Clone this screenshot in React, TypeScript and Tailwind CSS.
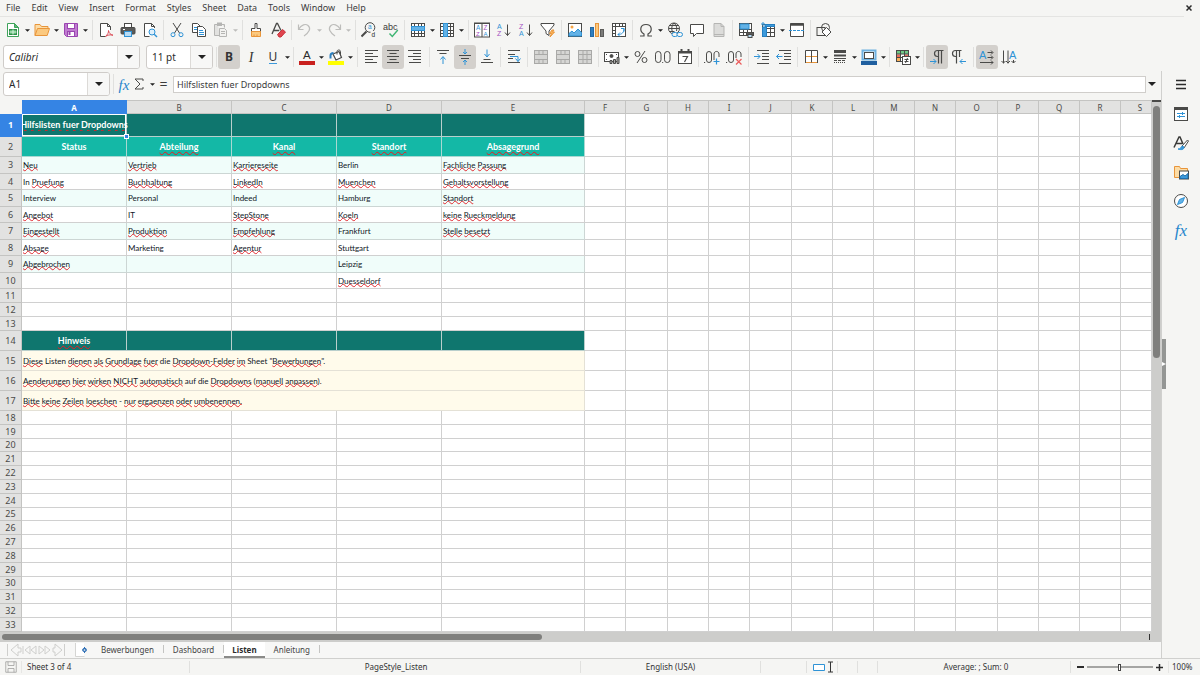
import { Fragment, ReactNode } from 'react'
import clsx from 'clsx'

const INK = '#4a4a48'
const BLUE = '#2f93d6'

/* ---------- Icons ---------- */

const Svg = ({ children, className }: { children: ReactNode; className?: string }) => (
  <svg viewBox="0 0 16 16" className={clsx('h-4 w-4 shrink-0', className)} fill="none" stroke={INK} strokeWidth="1">
    {children}
  </svg>
)

const Letter = ({ x, y, size, fill, children }: { x: number; y: number; size: number; fill: string; children: string }) => (
  <text x={x} y={y} fontSize={size} fill={fill} stroke="none" fontFamily="Liberation Sans, sans-serif">
    {children}
  </text>
)

const mergeGrid = (
  <>
    <rect x="1.5" y="1.5" width="13" height="13" fill="#d6d6d4" stroke="#a9a9a7" />
    <path d="M1.5 5.5h13M1.5 10.5h13M6 1.5v4M10 1.5v4M6 10.5v4M10 10.5v4" stroke="#a9a9a7" />
  </>
)

const icons: Record<string, ReactNode> = {
  new: (
    <>
      <path d="M2.5 1.5h7l4 4v9h-11z" fill="#fff" stroke="#3fa35b" />
      <path d="M9.5 1.5v4h4z" fill="#5dba74" stroke="#3fa35b" />
      <rect x="4.5" y="7.5" width="7" height="5" fill="#5dba74" stroke="#2f8f4a" />
      <path d="M4.5 10h7M8 7.5v5" stroke="#d9f2df" />
    </>
  ),
  open: (
    <>
      <path d="M1 13.500v-11h5l1.500 2h6.500v3" fill="#fcdca6" stroke="#e8953a" />
      <path d="M1 13.500l2.500-7h12l-2.300 7z" fill="#fbc97f" stroke="#e8953a" />
    </>
  ),
  save: (
    <>
      <path d="M1.500 1.500h13v13h-11l-2-2z" fill="#c07bd0" stroke="#9a45b0" />
      <rect x="4.500" y="1.500" width="7" height="5" fill="#fff" stroke="#9a45b0" />
      <rect x="4.500" y="9.500" width="7" height="5" fill="#fff" stroke="#9a45b0" />
      <path d="M6.500 10v3" stroke="#9a45b0" strokeWidth="2" />
    </>
  ),
  pdf: (
    <>
      <path d="M12.500 8v-3.500l-3-3h-7v13h5" fill="#fff" />
      <path d="M9.500 1.500v3h3" />
      <path d="M10.500 8.500c.3 2-1 4-3 6 2-1.500 4.500-2 7.500-1.300-2.500-.5-4-2-4.500-4.700z" stroke="#d9434e" strokeWidth=".9" />
    </>
  ),
  print: (
    <>
      <rect x="4.500" y="1.500" width="7" height="4" fill="#fff" />
      <rect x="1" y="5.500" width="14" height="6.500" rx="1" fill="#5b5b59" />
      <path d="M3 7.500h2" stroke="#fff" />
      <rect x="4.500" y="9.500" width="7" height="5" fill="#b9dcf5" stroke={BLUE} />
    </>
  ),
  preview: (
    <>
      <path d="M12.500 6v-1.500l-3-3h-7v13h5" fill="#fff" />
      <path d="M9.500 1.500v3h3" />
      <circle cx="10" cy="10" r="3" fill="#dff0fb" stroke={BLUE} />
      <path d="M12.200 12.200l2.800 2.800" stroke={BLUE} strokeWidth="1.400" />
    </>
  ),
  cut: (
    <>
      <path d="M4 1l6.500 10M12 1l-6.500 10" />
      <circle cx="4" cy="12.700" r="2" stroke={BLUE} />
      <circle cx="12" cy="12.700" r="2" stroke={BLUE} />
    </>
  ),
  copy: (
    <>
      <path d="M1.500 1.500h5l3 3v6h-8z" fill="#fff" />
      <path d="M3 5.500h4M3 7.500h4" stroke={BLUE} />
      <path d="M6.500 4.500h5l3 3v7h-8z" fill="#fff" />
      <path d="M8 8.500h4M8 10.500h5M8 12.500h5" stroke={BLUE} />
    </>
  ),
  paste: (
    <>
      <path d="M5 2.500h-3.500v11h5M9 2.500h2.500v3" fill="#e2e2e0" stroke="#b5b5b3" />
      <rect x="4.500" y="1" width="4" height="2.500" fill="#b5b5b3" stroke="#b5b5b3" />
      <path d="M6.500 6.500h5l2 2v6h-7z" fill="#f2f2f0" stroke="#b5b5b3" />
      <path d="M8 9.500h4M8 11.500h4" stroke="#b5b5b3" />
    </>
  ),
  clone: (
    <>
      <path d="M7 1.500h2v5h3.500v3h-9v-3h3.500z" fill="#fff" />
      <path d="M3.500 9.500h9v5h-9z" fill="#fbc97f" stroke="#e8953a" />
      <path d="M6 14.500v-2M9 14.500v-2" stroke="#e8953a" />
    </>
  ),
  clear: (
    <>
      <path d="M2 12l4.500-10.500h1l3.500 7M3.800 8.500h5.500" strokeWidth="1.300" />
      <path d="M7.500 12.500l5-5 3 2.500-4.500 5h-2z" fill="#e0454e" stroke="#c9323c" />
    </>
  ),
  undo: <path d="M1.500 2.500v5h5M1.500 7.500c3-5 7-6 9.500-4 3.500 3 1 7-4 10.500" stroke="#bdbdbb" strokeWidth="1.200" />,
  redo: <path d="M14.500 2.500v5h-5M14.500 7.500c-3-5-7-6-9.500-4-3.500 3-1 7 4 10.500" stroke="#bdbdbb" strokeWidth="1.200" />,
  find: (
    <>
      <circle cx="9" cy="5.500" r="4.800" />
      <path d="M5.500 9.500l-5 5" strokeWidth="2" />
      <Letter x={7} y={7.300} size={6.500} fill={BLUE}>a</Letter>
      <path d="M9.500 9h6v7h-6z" fill="#f5f5f3" stroke="none" />
      <Letter x={10.500} y={14.800} size={6.500} fill="#2b2b2b">d</Letter>
    </>
  ),
  spell: (
    <>
      <Letter x={0} y={8} size={9} fill="#3a3a38">abc</Letter>
      <path d="M6.500 11.500l2.800 3 5.500-6.500" stroke="#3fb573" strokeWidth="1.400" />
    </>
  ),
  row: (
    <>
      <rect x="1.500" y="1.500" width="13" height="13" fill="#fff" />
      <path d="M4.500 1.500v13M8.500 1.500v13M11.500 1.500v13M1.500 11.500h13" />
      <rect x="1.500" y="4.500" width="13" height="4" fill="#63b2e6" stroke={BLUE} />
    </>
  ),
  col: (
    <>
      <rect x="1.500" y="1.500" width="13" height="13" fill="#fff" />
      <path d="M1.500 4.500h13M1.500 8.500h13M1.500 11.500h13M11.500 1.500v13" />
      <rect x="4.500" y="1.500" width="4" height="13" fill="#63b2e6" stroke={BLUE} />
    </>
  ),
  sort: (
    <>
      <rect x=".5" y="1" width="15" height="14" fill="#fff" />
      <path d="M.5 1.500h15M8 2v13" />
      <Letter x={2} y={7.600} size={6.300} fill={BLUE}>A</Letter>
      <Letter x={2} y={14.400} size={6} fill="#a34fc0">Z</Letter>
      <Letter x={9.500} y={7.600} size={6.300} fill="#a34fc0">Z</Letter>
      <Letter x={9.500} y={14.400} size={6} fill={BLUE}>A</Letter>
    </>
  ),
  asc: (
    <>
      <Letter x={1} y={6.500} size={7} fill={BLUE}>A</Letter>
      <Letter x={1} y={14.400} size={7} fill="#a34fc0">Z</Letter>
      <path d="M11.500 2.500v11M9 10.500l2.500 3 2.500-3" />
    </>
  ),
  desc: (
    <>
      <Letter x={1} y={6.500} size={7} fill="#a34fc0">Z</Letter>
      <Letter x={1} y={14.400} size={7} fill={BLUE}>A</Letter>
      <path d="M11.500 2.500v11M9 10.500l2.500 3 2.500-3" />
    </>
  ),
  filter: (
    <>
      <path d="M1 1.500h13v1.500l-5 6v4.500l-3-2v-2.500l-5-6z" fill="#fff" />
      <path d="M12 8l-2.500 3.500h2l-1.500 3.500 4.500-5h-2l1.500-2z" fill="#fbb35a" stroke="#e8953a" />
    </>
  ),
  image: (
    <>
      <rect x="1.500" y="1.500" width="13" height="13" fill="#fff" />
      <circle cx="5" cy="5" r="1.500" fill="#f6a545" stroke="none" />
      <path d="M2 14v-2.500l3-2.500 2 2 4-4 3.500 3.500v3.500z" fill="#63b2e6" stroke={BLUE} />
    </>
  ),
  chart: (
    <>
      <rect x="1.500" y="5.500" width="3" height="9" fill="#2f7fc0" stroke="#2569a3" />
      <rect x="6.500" y="1.500" width="3" height="13" fill="#fbc97f" stroke="#e8953a" />
      <rect x="11.500" y="7.500" width="3" height="7" fill="#7b7b79" stroke="#5b5b59" />
    </>
  ),
  pivot: (
    <>
      <rect x="1.500" y="1.500" width="13" height="13" fill="#fff" />
      <path d="M1.500 4.500h13M4.500 1.500v13M8.500 1.500v3M11.500 1.500v3M1.500 8.500h3M1.500 11.500h3" />
      <path d="M10 6.500h3v3M13 6.500c0 4-2 6-6 6M9 10.500l-2 2 2 2" stroke={BLUE} />
    </>
  ),
  omega: <path d="M2 14h4v-2C1 9 2 2.500 8 2.500S15 9 10 12v2h4" strokeWidth="1.200" />,
  link: (
    <>
      <circle cx="7" cy="6.500" r="5.500" />
      <path d="M1.500 6.500h11M2.500 3.500h9M2.500 9.500h5M7 1c-3 3-3 8 0 11M7 1c3 3 3 5 2.500 8" />
      <rect x="5" y="10.500" width="5.500" height="4" rx="2" fill="#f5f5f3" stroke={BLUE} />
      <rect x="10" y="10.500" width="5.500" height="4" rx="2" fill="#f5f5f3" stroke={BLUE} />
    </>
  ),
  comment: <path d="M1.500 2.500h13v9h-7l-3 3v-3h-3z" fill="#fff" />,
  page: (
    <>
      <path d="M3 1.500h7l3 3v10h-10z" fill="#dcdcda" stroke="#b5b5b3" />
      <path d="M10 1.500v3h3M3 12.500h10" stroke="#b5b5b3" />
    </>
  ),
  printArea: (
    <>
      <rect x="1.500" y="1.500" width="12" height="12" fill="#fff" />
      <path d="M1.500 7.500h12M1.500 10.500h12M5.500 1.500v12M9.500 1.500v12" />
      <path d="M2 2h9v5h-9z" fill="#63b2e6" stroke={BLUE} />
      <rect x="8.500" y="10.500" width="7" height="3" fill="#5b5b59" />
      <rect x="10" y="12.500" width="4" height="3" fill="#b9dcf5" />
    </>
  ),
  freeze: (
    <>
      <rect x="2.500" y="2.500" width="12" height="12" fill="#fff" />
      <path d="M2.500 6.500h12M2.500 10.500h12M6.500 2.500v12M10.500 2.500v12" />
      <path d="M2.500 5h4v9.500h-4zM5 2.500h9.500v2H5z" fill="#3d9adb" stroke="#2480c2" />
      <path d="M3 0v4M1 2h4" stroke={BLUE} />
    </>
  ),
  split: (
    <>
      <path d="M1.500 1.500h13v13h-13z" fill="#fff" />
      <path d="M1.500 2.500h13" strokeWidth="2.500" />
      <path d="M0 8.500h16" stroke={BLUE} strokeDasharray="3 1" />
    </>
  ),
  shapes: (
    <>
      <rect x="1" y="5.500" width="8" height="8" />
      <circle cx="9.500" cy="5.500" r="4" />
      <path d="M10.500 5.500l4.500 4.500-4.500 4.500-4.500-4.500z" fill="#fff" />
    </>
  ),
  fontColor: (
    <>
      <Letter x={4} y={10} size={11.500} fill="#2b2b2b">A</Letter>
      <rect x="0" y="12" width="16" height="4" fill="#c9211e" stroke="none" />
    </>
  ),
  fill: (
    <>
      <path d="M5 5l6-2.500 2.500 6-5.500 2.500z" fill="#fff" strokeWidth="1.200" />
      <path d="M9 5.500v-3c0-2 3.500-2 3.500 0v4" />
      <path d="M2.500 9.500v-3c0-1.500 1-2.500 3-2.500" stroke="#2b7fbf" strokeWidth="2" />
      <rect x="0" y="12" width="16" height="4" fill="#ffff00" stroke="none" />
    </>
  ),
  left: <path d="M2 1.500h13M2 4.500h8M2 7.500h13M2 10.500h8M2 13.500h12" />,
  center: <path d="M2 1.500h12M4.500 4.500h7M2 7.500h12M4.500 10.500h7M2 13.500h12" />,
  right: <path d="M1 1.500h13M6 4.500h8M1 7.500h13M6 10.500h8M2 13.500h12" />,
  top: (
    <>
      <path d="M2 1.500h12M4.500 4.500h7" />
      <path d="M8 15v-7M5.500 10.500l2.500-3 2.500 3" stroke={BLUE} />
    </>
  ),
  middle: (
    <>
      <path d="M2 6.500h12M4 9.500h8" />
      <path d="M8 0v5M6 3l2 2 2-2M8 16v-5M6 13l2-2 2 2" stroke={BLUE} />
    </>
  ),
  bottom: (
    <>
      <path d="M4.500 10.500h7M2 13.500h12" />
      <path d="M8 .5v7M5.500 5l2.500 3 2.500-3" stroke={BLUE} />
    </>
  ),
  wrap: (
    <>
      <path d="M2 1.500h12M2 5.500h7M2 9.500h5M2 13.500h12" />
      <path d="M4 7.500h8v5M9.500 9.500l2.500 3 2.500-3" stroke={BLUE} />
    </>
  ),
  merge1: mergeGrid,
  merge2: mergeGrid,
  merge3: (
    <>
      {mergeGrid}
      <path d="M6 5.500v5M10 5.500v5" stroke="#a9a9a7" />
    </>
  ),
  currency: (
    <>
      <rect x=".5" y="3.500" width="14" height="9" fill="#fff" />
      <circle cx="7.500" cy="7" r="1.500" fill={INK} />
      <path d="M2 5.500h1M12 5.500h1M2 10.500h1" />
      <path d="M6 11.500h2v3h-2zM9.500 10.500h2v4h-2zM13 8.500h2v6h-2z" fill="#a8a8a6" />
    </>
  ),
  percent: (
    <>
      <circle cx="4.500" cy="5" r="2.500" />
      <circle cx="11.500" cy="11" r="2.500" />
      <path d="M12 2l-8 12" />
    </>
  ),
  number: (
    <>
      <rect x=".5" y="2.500" width="5.500" height="11" rx="2.700" />
      <rect x="9.500" y="2.500" width="5.500" height="11" rx="2.700" />
      <path d="M7.200 13.500h1" />
    </>
  ),
  date: (
    <>
      <rect x="1.500" y="2.500" width="13" height="12" fill="#fff" />
      <path d="M1.500 3.500h13M4.500 0v3M11.500 0v3" strokeWidth="2" />
      <path d="M5.500 7.500h5l-3 5.500" strokeWidth="1.200" />
    </>
  ),
  addDecimal: (
    <>
      <rect x="2.500" y="2.500" width="5" height="11" rx="2.500" />
      <path d="M10 11V5c0-3.400 5-3.400 5 0v3M0 13.500h1.200" />
      <path d="M12.500 9.500v6M9.500 12.500h6" stroke={BLUE} strokeWidth="1.200" />
    </>
  ),
  delDecimal: (
    <>
      <rect x="2.500" y="2.500" width="5" height="11" rx="2.500" />
      <path d="M10 9V5c0-3.400 5-3.400 5 0v3M0 13.500h1.200" />
      <path d="M10 10l5.500 5.500M15.500 10l-5.500 5.500" stroke="#ea5b5b" strokeWidth="1.200" />
    </>
  ),
  indent: (
    <>
      <path d="M3 1.500h12M8 4.500h7M8 7.500h7M8 10.500h7M3 14.500h12" />
      <path d="M0 7.500h6M3.500 5l2.500 2.500-2.500 2.500" stroke={BLUE} />
    </>
  ),
  outdent: (
    <>
      <path d="M3 1.500h12M8 4.500h7M8 7.500h7M8 10.500h7M3 14.500h12" />
      <path d="M6.500 7.500h-6M3 5l-2.500 2.500 2.500 2.500" stroke={BLUE} />
    </>
  ),
  borders: (
    <>
      <path d="M2.500 1.500h12v12h-12z" fill="#fff" stroke="none" />
      <path d="M3 7.500h11M3 13.500h11" stroke="#e8953a" />
      <path d="M2.500 14v-12.500h12v12.500M8.500 2v11.500" />
    </>
  ),
  lineStyle: (
    <>
      <path d="M2 2.500h12" strokeWidth="3" />
      <path d="M2 6.500h12" strokeWidth="2" />
      <path d="M2 9.500h12" />
      <path d="M2 11.500h12" strokeDasharray="3 1" />
      <path d="M2 13.500h12" strokeDasharray="1 1" />
    </>
  ),
  borderColor: (
    <>
      <rect x="1.500" y="1.500" width="13" height="9" fill="#fff" stroke="#6fb1e0" strokeWidth="2" />
      <rect x="3.500" y="3.500" width="9" height="6" />
      <rect x="0" y="12" width="16" height="4" fill="#1f5f9f" stroke="none" />
    </>
  ),
  conditional: (
    <>
      <rect x="1.500" y="1.500" width="12" height="11" fill="#fff" />
      <path d="M2 2h11v3h-11z" fill="#6fc987" stroke="none" />
      <path d="M2 5.500h3v3h-3zM9 5.500h4v2h-4z" fill="#ea6b5b" stroke="none" />
      <path d="M2 9h3v3h-3z" fill="#fbb35a" stroke="none" />
      <path d="M1.500 5h12M1.500 8.500h12M5.500 1.500v11M9.500 1.500v11" />
      <rect x="7.500" y="7.500" width="8" height="8" fill="#fff" />
      <path d="M9.500 10.500h4M9.500 12.500h4M12.500 9l-2 5" />
    </>
  ),
  ltr: (
    <>
      <path d="M9.500 14.500v-13M12.500 14.500v-13M14.500 1.500h-6c-4 0-4 6 0 6h1" strokeWidth="1.200" />
      <path d="M1 12.500h6M4.500 10l2.500 2.500-2.500 2.500" stroke={BLUE} />
    </>
  ),
  rtl: (
    <>
      <path d="M5.500 14.500v-13M8.500 8v-6.500M10.500 1.500h-6c-4 0-4 6 0 6h1" strokeWidth="1.200" />
      <path d="M15 12.500h-6M11.500 10l-2.500 2.500 2.500 2.500" stroke={BLUE} />
    </>
  ),
  horizontal: (
    <>
      <Letter x={0} y={10} size={11} fill={BLUE}>A</Letter>
      <path d="M8.500 3.500h5M8.500 8.500h5M1 13.500h13M12 1.500l2 2-2 2M12 6.500l2 2-2 2M12 11.500l2 2-2 2" />
    </>
  ),
  vertical: (
    <>
      <Letter x={8} y={10} size={11} fill={BLUE}>A</Letter>
      <path d="M2.500 1.500v13M7 1.500v13M12.500 11v3M.5 12l2 2 2-2M5 12l2 2 2-2M10.500 12l2 2 2-2" />
    </>
  ),
}

const sideIcons: Record<string, ReactNode> = {
  Menu: <path d="M3 3.500h10M3 7.500h10M3 11.500h10" stroke="#2b2b2b" strokeWidth="1.500" />,
  Properties: (
    <>
      <rect x="1.500" y="1.500" width="13" height="13" fill="#fff" />
      <path d="M1.500 2.500h13" strokeWidth="3" />
      <path d="M4 7.500h8M4 10.500h8M9.500 6v3M6.500 9v3" stroke={BLUE} />
    </>
  ),
  Styles: (
    <>
      <path d="M1 12.500L6 2h1l3 7M3 8.500h6" stroke="#3a3a38" strokeWidth="1.500" />
      <path d="M9 11l5.500-6 1 1-4.500 7z" fill="#fff" />
      <path d="M5 14c3 1 6 1 6-2l-2-1c-1 1-1 3-4 3z" fill="#3d9adb" stroke={BLUE} />
    </>
  ),
  Gallery: (
    <>
      <path d="M1.500 13.500v-11h5l1 2h7v9z" fill="#fcdca6" stroke="#e8953a" />
      <rect x="6.500" y="7" width="9" height="8" fill="#fff" />
      <path d="M7 14.500v-2l3-2 2 1.500 3-2.500v5z" fill="#3d9adb" stroke="#1f6fae" />
    </>
  ),
  Navigator: (
    <>
      <circle cx="8" cy="8" r="6.500" fill="#fff" />
      <path d="M11.500 4.500l-2 5-5 2 2-5z" fill="#63b2e6" stroke={BLUE} />
    </>
  ),
}

const Fx = ({ className }: { className?: string }) => (
  <span className={clsx('font-["Liberation_Serif",serif] leading-none text-[#2585cc] italic', className)}>fx</span>
)

const Caret = ({ muted, large }: { muted?: boolean; large?: boolean }) => (
  <svg viewBox="0 0 8 4" className={large ? 'h-1 w-2' : 'h-[3px] w-[5px]'}>
    <path d="M0 0h8L4 4z" fill={muted ? '#bdbdbb' : '#222'} />
  </svg>
)

/* ---------- Toolbars ---------- */

const standardBar =
  'new v open v save v || pdf print preview | cut copy paste m || clone clear | undo m redo m || find spell | row v col v || sort asc desc filter | image chart pivot | omega v link comment page | printArea freeze v split | shapes'
const formatBar =
  'bold italic underline v | fontColor v fill v || left center right || top middle bottom | wrap | merge1 merge2 merge3 | currency v percent number date | addDecimal delDecimal || indent outdent | borders v lineStyle v borderColor v | conditional v | ltr rtl || horizontal vertical'

const pressed = ['bold', 'center', 'middle', 'ltr', 'horizontal']

const glyphs: Record<string, ReactNode> = {
  bold: <span className="text-[12px] font-bold">B</span>,
  italic: <span className="font-['Liberation_Serif',serif] text-[14px] italic">I</span>,
  underline: <span className="border-b border-[#3d9adb] text-[12px] leading-[13px]">U</span>,
}

function Tools({ layout }: { layout: string }) {
  return (
    <>
      {layout.split(' ').map((name, i) => {
        if (name === '|' || name === '||') {
          return (
            <span key={i} className={clsx('flex justify-center', name === '|' ? 'w-[5px]' : 'w-[6px]')}>
              <span className="h-5 w-px bg-[#e0e0de]" />
            </span>
          )
        }
        if (name === 'v' || name === 'm') {
          return (
            <button key={i} aria-label="More options" className="flex h-6 w-[7px] items-center justify-center">
              <Caret muted={name === 'm'} />
            </button>
          )
        }
        return (
          <button
            key={i}
            aria-label={name}
            className={clsx(
              'flex h-6 w-[22px] items-center justify-center rounded-[3px] text-[#333]',
              pressed.includes(name) && 'bg-[#d3d0cc]',
            )}
          >
            {glyphs[name] ?? <Svg>{icons[name]}</Svg>}
          </button>
        )
      })}
    </>
  )
}

function Combo({ label, value, width, italic }: { label: string; value: string; width: string; italic?: boolean }) {
  return (
    <div className={clsx('flex h-6 overflow-hidden rounded-[3px] border border-[#cfccc9] bg-white', width)}>
      <input
        aria-label={label}
        defaultValue={value}
        className={clsx('min-w-0 flex-1 bg-transparent pl-[5px] text-[10px] text-[#2b2b2b] outline-none', italic && 'italic')}
      />
      <button
        aria-label={`${label} list`}
        className="flex w-[22px] items-center justify-center border-l border-[#dcdad7] bg-[#f7f7f6]"
      >
        <Caret large />
      </button>
    </div>
  )
}

/* ---------- Sheet ---------- */

const columns = 'ABCDEFGHIJKLMNOPQRS'.split('')
const columnWidths: Record<string, string> = {
  A: 'w-[105px]', B: 'w-[105px]', C: 'w-[105px]', D: 'w-[105px]', E: 'w-[143px]',
  F: 'w-[41px]', G: 'w-[42px]', H: 'w-[41px]', I: 'w-[41px]', J: 'w-[42px]', K: 'w-[41px]', L: 'w-[41px]',
  M: 'w-[41px]', N: 'w-[41px]', O: 'w-[42px]', P: 'w-[41px]', Q: 'w-[41px]', R: 'w-[41px]',
}

// words between asterisks are flagged by the spell checker
const cells: Record<number, string[]> = {
  1: ['*Hilfslisten fuer Dropdowns*'],
  2: ['Status', '*Abteilung*', '*Kanal*', '*Standort*', '*Absagegrund*'],
  3: ['*Neu*', '*Vertrieb*', '*Karriereseite*', 'Berlin', '*Fachliche* *Passung*'],
  4: ['In *Pruefung*', '*Buchhaltung*', '*LinkedIn*', '*Muenchen*', '*Gehaltsvorstellung*'],
  5: ['Interview', 'Personal', 'Indeed', 'Hamburg', '*Standort*'],
  6: ['*Angebot*', 'IT', '*StepStone*', '*Koeln*', '*keine* *Rueckmeldung*'],
  7: ['*Eingestellt*', '*Produktion*', '*Empfehlung*', 'Frankfurt', '*Stelle* *besetzt*'],
  8: ['*Absage*', 'Marketing', '*Agentur*', 'Stuttgart'],
  9: ['*Abgebrochen*', '', '', 'Leipzig'],
  10: ['', '', '', '*Duesseldorf*'],
  14: ['*Hinweis*'],
  15: ['*Diese* Listen *dienen* *als* *Grundlage* *fuer* die *Dropdown-Felder* *im* Sheet "*Bewerbungen*".'],
  16: ['*Aenderungen* *hier* *wirken* *NICHT* *automatisch* auf die *Dropdowns* (*manuell* *anpassen*).'],
  17: ['*Bitte* *keine* *Zeilen* *loeschen* - *nur* *ergaenzen* *oder* *umbenennen.*'],
}

function rowHeight(row: number) {
  if (row === 1) return 'h-[23px]'
  if (row === 2 || (row >= 14 && row <= 17)) return 'h-5'
  if (row >= 3 && row <= 10) return row % 2 ? 'h-[17px]' : 'h-4'
  return [20, 25, 30].includes(row) ? 'h-[13px]' : 'h-[14px]'
}

function cellFill(row: number, col: number) {
  if (col > 4) return 'border-[#d0d0d0] bg-white'
  if (row === 1 || row === 14) return 'border-[#b9cfcc] bg-[#0f766e]'
  if (row === 2) return 'border-[#a9d8d2] bg-[#14b8a6]'
  if ([3, 5, 7, 9].includes(row)) return 'border-[#ccd6d4] bg-[#f0fdfa]'
  return 'border-[#d0d0d0] bg-white'
}

function CellText({ text, heading }: { text: string; heading?: boolean }) {
  return (
    <>
      {text.split('*').map((part, i) =>
        i % 2 ? (
          <span
            key={i}
            className={clsx(
              'underline decoration-wavy decoration-1 [text-decoration-skip-ink:none]',
              heading ? 'decoration-[#f01820] underline-offset-1' : 'decoration-[#e02a30] underline-offset-[-1px]',
            )}
          >
            {part}
          </span>
        ) : (
          <Fragment key={i}>{part}</Fragment>
        ),
      )}
    </>
  )
}

function Row({ row }: { row: number }) {
  const isHeading = row === 1 || row === 2 || row === 14
  const isNote = row >= 15 && row <= 17
  return (
    <tr className={rowHeight(row)}>
      <th
        scope="row"
        className={clsx(
          'border-r border-b p-0 text-center text-[9px] leading-[12px]',
          row === 1
            ? 'border-[#3584e4] bg-[#3584e4] font-bold text-white'
            : 'border-[#c4c4c2] bg-[#e2e2e1] font-normal text-[#4a4a48]',
        )}
      >
        {row}
      </th>
      {isNote && (
        <td
          colSpan={5}
          className="border-r border-b border-[#e4e1d6] bg-[#fffbeb] p-0 pl-px font-['Lato',sans-serif] text-[8px] leading-[12px] whitespace-nowrap text-[#111827]"
        >
          <CellText text={cells[row][0]} />
        </td>
      )}
      {columns.slice(isNote ? 5 : 0).map((name, i) => {
        const col = isNote ? i + 5 : i
        const text = cells[row]?.[col] ?? ''
        return (
          <td
            key={name}
            className={clsx(
              "border-r border-b p-0 font-['Lato',sans-serif] leading-[12px] whitespace-nowrap",
              cellFill(row, col),
              isHeading ? 'text-center text-[9px] font-bold text-white' : 'pl-px text-[8px] text-[#111827]',
              row === 1 && col === 0 && 'relative',
            )}
          >
            {row === 1 && col === 0 ? (
              <>
                <div className="relative z-10 flex justify-center [clip-path:inset(0_-8px_0_0)]">
                  <span><CellText text={text} heading /></span>
                </div>
                <span className="absolute inset-0 border border-white" />
                <span className="absolute -right-[3px] -bottom-[3px] z-20 h-[5px] w-[5px] border border-white bg-[#3584e4]" />
              </>
            ) : (
              <CellText text={text} heading={isHeading} />
            )}
          </td>
        )
      })}
    </tr>
  )
}

function Sheet() {
  return (
    <table className="w-full table-fixed border-separate border-spacing-0">
      <colgroup>
        <col className="w-[22px]" />
        {columns.map((name) => (
          <col key={name} className={columnWidths[name]} />
        ))}
      </colgroup>
      <thead>
        <tr className="h-[14px]">
          <td className="bg-[#f5f5f3] p-0" />
          {columns.map((name) => (
            <th
              key={name}
              scope="col"
              className={clsx(
                'border-t border-r border-b p-0 text-center text-[8px] leading-[11px]',
                name === 'A'
                  ? 'border-[#3584e4] bg-[#3584e4] font-bold text-white'
                  : 'border-[#c4c4c2] bg-[#e2e2e1] font-normal text-[#4a4a48]',
                name === 'S' && 'pl-2',
              )}
            >
              {name}
            </th>
          ))}
        </tr>
      </thead>
      <tbody>
        {Array.from({ length: 33 }, (_, i) => (
          <Row key={i} row={i + 1} />
        ))}
      </tbody>
    </table>
  )
}

/* ---------- Bottom bars ---------- */

function SheetTabs() {
  return (
    <div className="flex h-4 shrink-0 items-center bg-[#f7f7f6] pl-[6px] text-[8px]">
      <button aria-label="Scroll sheets">
        <svg viewBox="0 0 60 14" className="h-[14px] w-[60px]" fill="none" stroke="#cfcfcd">
          <path d="M1.500 1v12M12 1l-7 6 7 6v-4h3v-4h-3zM17 3v8M24 3l-5 4 5 4zM30 3l-5 4 5 4zM33 3l5 4-5 4zM39 3l5 4-5 4zM47 5v4h2v4l7-6-7-6v4zM58.500 1v12" />
        </svg>
      </button>
      <button aria-label="Add sheet" className="ml-2 flex w-4">
        <svg viewBox="0 0 16 14" className="h-[14px] w-4" fill="none">
          <path d="M1.500 0v13.500h9" stroke="#d5d5d3" />
          <path d="M2 0h8v13H2z" fill="#fff" />
          <circle cx="10.500" cy="7" r="1.500" stroke="#2f6fb5" strokeWidth="1.300" />
          <path d="M10.500 4v1.500M10.500 8.500v1.500M8 7h1M12 7h1" stroke="#2f6fb5" />
        </svg>
      </button>
      <div className="flex h-full items-stretch pl-[2px]">
        {['Bewerbungen', 'Dashboard', 'Listen', 'Anleitung'].map((tab) => (
          <button
            key={tab}
            className={clsx(
              'flex items-center leading-[13px]',
              tab === 'Listen'
                ? 'border-b-2 border-[#8a8a88] bg-white px-2 font-bold text-[#2b2b2b]'
                : 'border-b-2 border-transparent pl-[9px] text-[#444]',
            )}
          >
            {tab}
            {tab !== 'Listen' && <span className="ml-[9px] h-2 w-px bg-[#c4c4c2]" />}
          </button>
        ))}
      </div>
    </div>
  )
}

function StatusBar() {
  return (
    <footer className="flex h-[17px] shrink-0 items-center border-t border-[#d0d0ce] bg-[#f5f5f3] text-[8px] text-[#333]">
      <span className="flex w-[22px] justify-center border-r border-[#e6e6e4]">
        <svg viewBox="0 0 16 16" className="h-3 w-3" fill="none" stroke="#9a9a98">
          <path d="M1 1h14v14h-14zM4 1v5h8v-5M4 15v-5h8v5" />
        </svg>
      </span>
      <span className="w-[168px] border-r border-[#e0e0de] pl-[5px]">Sheet 3 of 4</span>
      <span className="w-[391px] border-r border-[#e0e0de] pl-[22px] text-center">PageStyle_Listen</span>
      <span className="w-[180px] border-r border-[#e0e0de] text-center">English (USA)</span>
      <span className="w-[45px]" />
      <span className="flex w-[32px] items-center gap-1 border-x border-[#e0e0de] pl-[6px]">
        <svg viewBox="0 0 20 12" className="h-3 w-5" fill="none">
          <path d="M.5 3.500h11v6h-11z" fill="#fff" stroke={BLUE} />
          <path d="M15 1h5M17.500 1v10M15 11h5" stroke="#333" />
        </svg>
      </span>
      <span className="w-5 border-r border-[#e0e0de]">&nbsp;</span>
      <span className="w-5 border-r border-[#e0e0de]">&nbsp;</span>
      <span className="flex-1 border-r border-[#e0e0de] pl-1 text-center">Average: ; Sum: 0</span>
      <span className="flex items-center gap-[3px] pr-[5px] pl-[6px]">
        <button aria-label="Zoom out" className="h-[2px] w-[7px] bg-[#2b2b2b]" />
        <input
          type="range"
          aria-label="Zoom"
          min={0}
          max={100}
          defaultValue={49}
          className="h-[2px] w-[66px] appearance-none bg-[#a5a5a3] [&::-webkit-slider-thumb]:h-[7px] [&::-webkit-slider-thumb]:w-[3px] [&::-webkit-slider-thumb]:appearance-none [&::-webkit-slider-thumb]:border [&::-webkit-slider-thumb]:border-[#444] [&::-webkit-slider-thumb]:bg-white"
        />
        <button aria-label="Zoom in">
          <svg viewBox="0 0 7 7" className="h-[7px] w-[7px]">
            <path d="M0 3.500h7M3.500 0v7" stroke="#2b2b2b" strokeWidth="1.500" />
          </svg>
        </button>
      </span>
      <span className="w-8 border-l border-[#e6e6e4] pl-[3px]">100%</span>
    </footer>
  )
}

export default function App() {
  return (
    <div className="flex h-screen flex-col overflow-hidden bg-[#f5f5f3] font-['Noto_Sans',sans-serif] text-[#3c3c3c]">
      <nav className="mr-4 flex h-[17px] shrink-0 items-center border-b border-[#e4e4e2] text-[9px]">
        {['File', 'Edit', 'View', 'Insert', 'Format', 'Styles', 'Sheet', 'Data', 'Tools', 'Window', 'Help'].map((item) => (
          <button key={item} className="pr-[5px] pl-[6px]">{item}</button>
        ))}
        <button aria-label="Close document" className="-mr-2 ml-auto">
          <svg viewBox="0 0 6 6" className="h-[6px] w-[6px]">
            <path d="M.5 .5l5 5M5.500 .5l-5 5" stroke="#2b2b2b" strokeWidth="1.500" />
          </svg>
        </button>
      </nav>

      <div className="flex h-[26px] shrink-0 items-center pl-[2px]">
        <Tools layout={standardBar} />
      </div>
      <div className="flex h-7 shrink-0 items-center pl-[3px]">
        <Combo label="Font name" value="Calibri" width="w-[137px]" italic />
        <span className="w-[6px]" />
        <Combo label="Font size" value="11 pt" width="w-[67px]" />
        <span className="mr-[1px] ml-[3px] h-5 w-px bg-[#e0e0de]" />
        <Tools layout={formatBar} />
      </div>

      <div className="flex min-h-0 flex-1">
        <main className="flex min-w-0 flex-1 flex-col">
          <div className="flex h-[29px] shrink-0 items-center pb-[3px] pl-[3px]">
            <Combo label="Name box" value="A1" width="w-[107px]" />
            <span className="ml-[3px] h-5 w-px bg-[#e0e0de]" />
            <button aria-label="Function wizard" className="w-5"><Fx className="text-[15px]" /></button>
            <button aria-label="Select function" className="w-3">
              <svg viewBox="0 0 10 12" className="h-3 w-[10px]" fill="none" stroke={INK}>
                <path d="M9 3v-2h-8l5 5-5 5h8v-2" />
              </svg>
            </button>
            <button aria-label="Function list" className="flex w-3 justify-center"><Caret /></button>
            <button aria-label="Formula" className="mr-1 w-[11px] text-[14px] leading-none">=</button>
            <input
              aria-label="Input line"
              defaultValue="Hilfslisten fuer Dropdowns"
              className="h-[17px] min-w-0 flex-1 border border-[#d0cecb] bg-white pl-[3px] text-[9px] text-[#3c3c3c] outline-none"
            />
            <button aria-label="Expand formula bar" className="flex w-[15px] justify-center pr-1"><Caret large /></button>
          </div>

          <div className="flex min-h-0 flex-1">
            <div className="min-w-0 flex-1 overflow-hidden bg-white">
              <Sheet />
            </div>
            <div className="w-[9px] border-t-2 border-[#4a4a48] bg-[#cdcdcb] px-[1px] pt-1">
              <div className="h-[48%] rounded-full bg-[#7f7f7d]" />
            </div>
          </div>
          <div className="flex h-[10px] shrink-0 items-center justify-between bg-[#cdcdcb] pr-[11px] pl-[2px]">
            <div className="h-[6px] w-[47%] rounded-full bg-[#7f7f7d]" />
            <div className="h-[6px] w-px bg-[#333]" />
          </div>
          <SheetTabs />
        </main>

        <aside className="relative flex w-[39px] flex-col items-center gap-[13px] border-l border-[#d0d0ce] pt-[6px]">
          {Object.entries(sideIcons).map(([name, icon]) => (
            <button key={name} aria-label={name}><Svg>{icon}</Svg></button>
          ))}
          <button aria-label="Functions" className="flex h-4 items-center"><Fx className="text-[17px]" /></button>
          <button
            aria-label="Hide sidebar"
            className="absolute top-[268px] left-0 flex h-[50px] w-1 items-center justify-center bg-[#949694]"
          >
            <svg viewBox="0 0 4 4" className="h-1 w-1"><path d="M0 0l4 2-4 2z" fill="#fff" /></svg>
          </button>
        </aside>
      </div>

      <StatusBar />
    </div>
  )
}
